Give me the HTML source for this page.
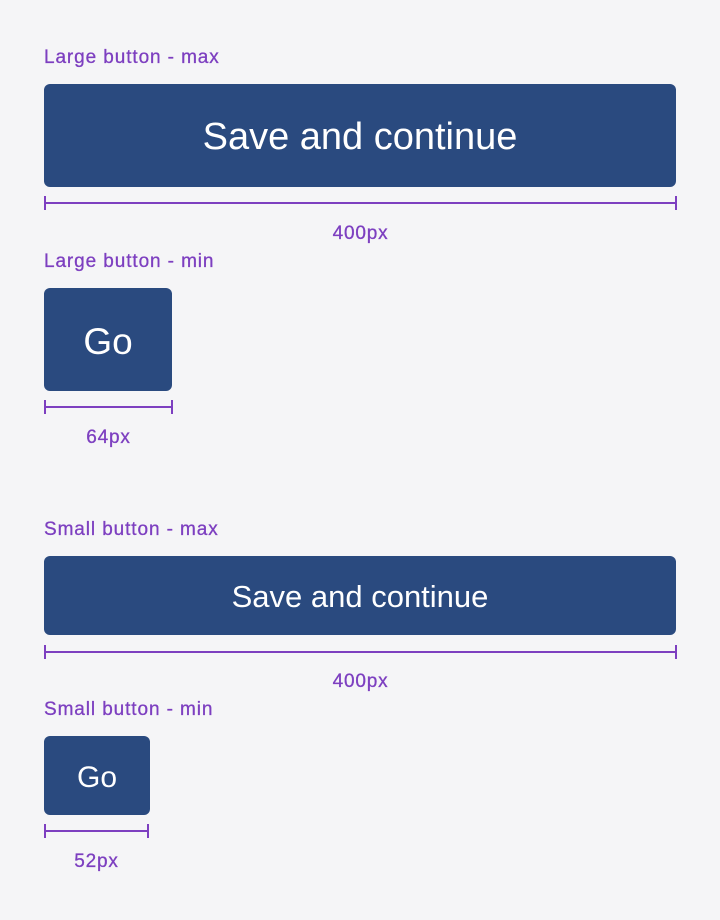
<!DOCTYPE html>
<html><head><style>
body{margin:0;width:720px;height:920px;background:#f5f5f7;position:relative;font-family:"Liberation Sans",sans-serif;overflow:hidden}
.l{position:absolute;left:44px;color:#7d3fc0;font-size:19px;letter-spacing:0.9px;line-height:22px;white-space:nowrap;-webkit-text-stroke:0.3px #7d3fc0}
.b{position:absolute;left:44px;background:#2a4a7f;border-radius:6px;color:#fff;display:flex;align-items:center;justify-content:center}
.r{position:absolute;height:2px;background:#7d3fc0}
.r:before,.r:after{content:"";position:absolute;top:-6px;width:2px;height:14px;background:#7d3fc0}
.r:before{left:0}.r:after{right:0}
.c{position:absolute;color:#7d3fc0;font-size:19px;letter-spacing:0.8px;line-height:22px;text-align:center;-webkit-text-stroke:0.3px #7d3fc0}
</style></head><body>
<div class="l" style="top:47px">Large button - max</div>
<div class="b" style="top:84px;width:632px;height:103px;font-size:38px;padding-top:4px;box-sizing:border-box">Save and continue</div>
<div class="r" style="left:44px;top:202px;width:633px"></div>
<div class="c" style="left:44px;width:633px;top:223px">400px</div>
<div class="l" style="top:251px">Large button - min</div>
<div class="b" style="top:288px;width:128px;height:103px;font-size:37px;padding-top:4px;box-sizing:border-box">Go</div>
<div class="r" style="left:44px;top:406px;width:129px"></div>
<div class="c" style="left:44px;width:129px;top:427px">64px</div>
<div class="l" style="top:519px">Small button - max</div>
<div class="b" style="top:556px;width:632px;height:79px;font-size:31px;padding-top:3px;box-sizing:border-box">Save and continue</div>
<div class="r" style="left:44px;top:651px;width:633px"></div>
<div class="c" style="left:44px;width:633px;top:671px">400px</div>
<div class="l" style="top:699px">Small button - min</div>
<div class="b" style="top:736px;width:106px;height:79px;font-size:30px;padding-top:4px;box-sizing:border-box">Go</div>
<div class="r" style="left:44px;top:830px;width:105px"></div>
<div class="c" style="left:44px;width:105px;top:851px">52px</div>
</body></html>
